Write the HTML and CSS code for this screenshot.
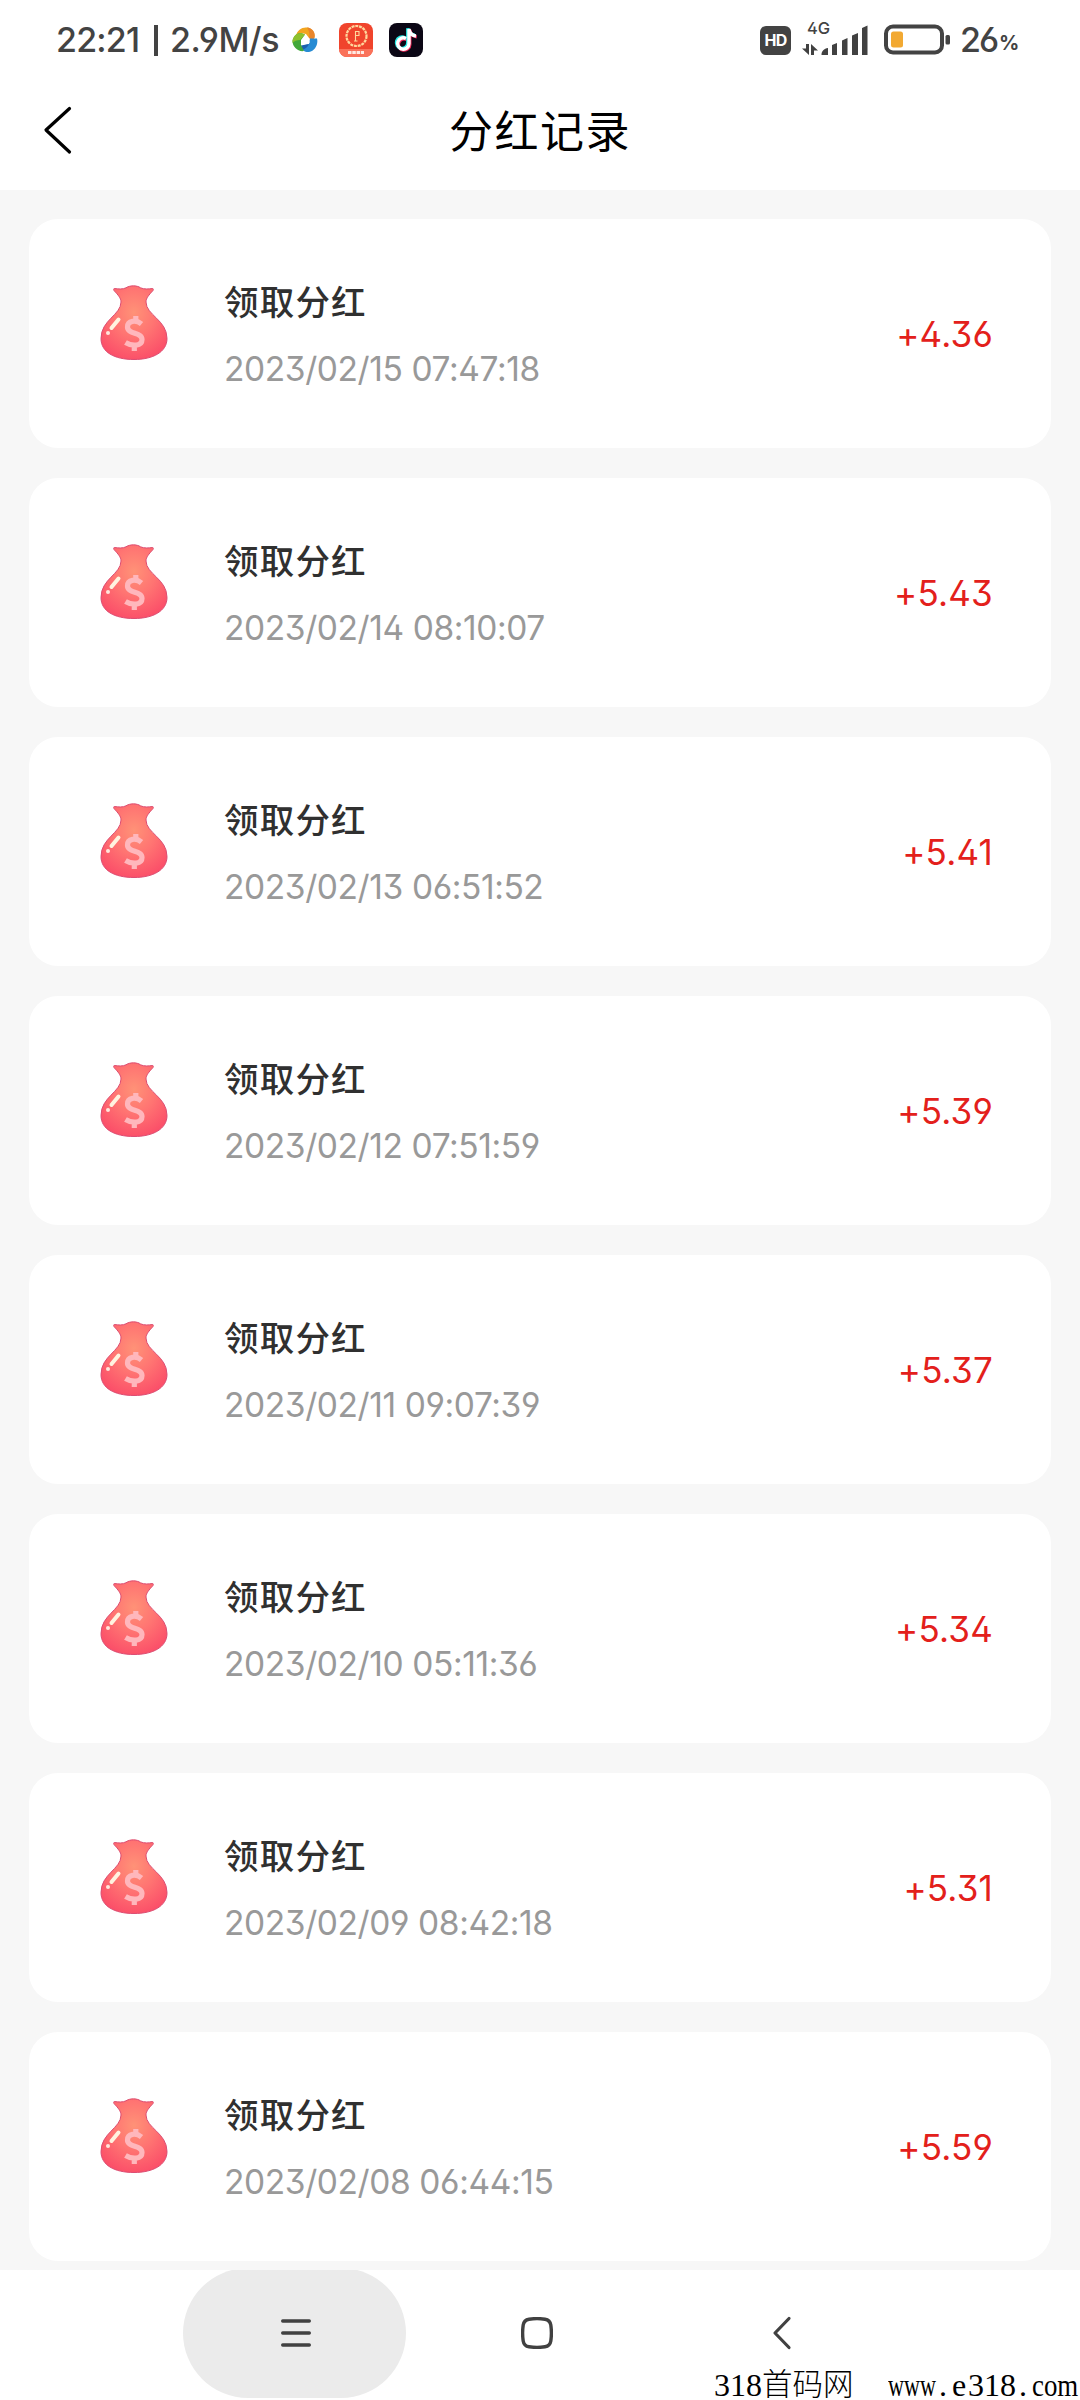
FILE: index.html
```
<!DOCTYPE html>
<html lang="zh-CN">
<head>
<meta charset="utf-8">
<title>分红记录</title>
<link rel="stylesheet" href="styles.css">
</head>
<body>
<svg width="0" height="0" class="defs">
  <defs>
    <radialGradient id="bagFill" cx="0.5" cy="0.36" r="0.65">
      <stop offset="0" stop-color="#ff9277"/><stop offset="0.5" stop-color="#ff7472"/><stop offset="1" stop-color="#fb5069"/>
    </radialGradient>
    <symbol id="bag" viewBox="0 0 68 76">
      <path d="M14.500 3.500C18 4 23 4.500 26 2.800C30 .2 37 .2 40.500 2.800C44 4.500 49 4 52.500 3.500C53.500 3.500 53.500 4.500 53 5.500C49 10 46 13 46 17C46 30 67 35 67 53.500C67 67 53 74.500 34 74.500C14 74.500 1 67 1 53.500C1 35 21 30 21 17C21 13 18 10 14 5.500C13.500 4.500 13.500 3.500 14.500 3.500Z" fill="url(#bagFill)" stroke="#dc4d72" stroke-width="1"/>
      <path d="M18.500 34.500L11.500 43" stroke="#fff3df" stroke-width="4" stroke-linecap="round"/>
      <circle cx="8" cy="48" r="2" fill="#ffe6dc"/>
      <path d="M41.500 39C36 34.500 27.500 35.500 27.500 42C27.500 50 42 46.500 42 54.500C42 61.500 32 61.500 25.500 57.500M35.800 31V37M34.300 59V66" fill="none" stroke="#ffb7bc" stroke-width="5.200"/>
    </symbol>
  </defs>
</svg>
<div class="screen">
  <div class="status">
    <span class="clock">22:21</span><span class="bar"></span><span class="speed">2.9M/s</span>
    <svg class="swirl" width="26" height="26" viewBox="0 0 26 26">
      <path d="M4 9C5 3 10 0 15 .5C20 1 23 5 22.500 10L21 13L17 11L14 7L9 6Z" fill="#f2a51e"/>
      <path d="M15 .5C20 1 24 5 22.500 11L20.500 13L17 11C18 7 17 3 15 .5Z" fill="#e8852b"/>
      <path d="M18 11.500L25 11.500C26.500 17 23 24 17 25C13 25.500 10 23 9 20L13 18L17 17Z" fill="#278bd3"/>
      <path d="M9 18.500L17 17C16 20 13 22 10 23Z" fill="#1c5fae"/>
      <path d="M9 6L13 7.500L9 13L9 18L12 24C6 25 .5 20 .5 14C1.500 9 5 6 9 6Z" fill="#42a83a"/>
      <path d="M9 6L13 7.500L8 13C5 13 2 14 .5 16C0 10 4 6 9 6Z" fill="#8dc02d"/>
      <path d="M13.500 8.500L18 15.500L9 16.500Z" fill="#fff"/>
    </svg>
    <svg class="app" width="34" height="34" viewBox="0 0 34 34">
      <rect width="34" height="34" rx="8" fill="#f0442c"/>
      <path d="M0 26H34A8 8 0 0 1 26 34H8A8 8 0 0 1 0 26Z" fill="#fa725a"/>
      <circle cx="17.500" cy="13" r="10" fill="none" stroke="#ffd79d" stroke-width="2.200" stroke-dasharray="3 .8"/>
      <path d="M16.500 18V8.500H20V12.500H17M15 18H18.500" fill="none" stroke="#ffd79d" stroke-width="1.100"/>
      <path d="M9 29.500H25" stroke="#ffe9e2" stroke-width="3.200" stroke-dasharray="3.500 .8"/>
    </svg>
    <svg class="app" width="34" height="34" viewBox="0 0 34 34">
      <rect width="34" height="34" rx="8" fill="#0b0715"/>
      <g fill="none" stroke-width="3.400">
        <path d="M17 15.500A5.700 5.700 0 1 0 20 20.500V6C20.500 10 23 12.500 27 13" stroke="#f3295b" transform="translate(.8 .9)"/>
        <path d="M17 15.500A5.700 5.700 0 1 0 20 20.500V6C20.500 10 23 12.500 27 13" stroke="#28e9e5" transform="translate(-1.200 -.8)"/>
        <path d="M17 15.500A5.700 5.700 0 1 0 20 20.500V6C20.500 10 23 12.500 27 13" stroke="#fff"/>
      </g>
    </svg>
    <span class="grow"></span>
    <span class="hd">HD</span>
    <div class="signal">
      <span class="net">4G</span>
      <svg width="68" height="34" viewBox="0 0 68 34" fill="#414141">
        <path d="M5 21H8V32L1 25.500H5ZM10 32V21L17 27.500H13V32Z"/>
        <path d="M20.500 32C20.500 28 23 25.500 27 25V32ZM31 32V22L36 20V32ZM41 32V17.500L46.500 15V32ZM51 32V12.500L57 10V32ZM61 32V5L66.500 2.500V32Z"/>
      </svg>
    </div>
    <svg class="battery" width="68" height="32" viewBox="0 0 68 32">
      <rect x="2" y="2.500" width="56" height="26" rx="7" fill="none" stroke="#434343" stroke-width="4"/>
      <rect x="7" y="7.500" width="12" height="16" rx="2.500" fill="#f2a932"/>
      <rect x="61.500" y="11" width="4.500" height="9.500" rx="1.500" fill="#434343"/>
    </svg>
    <span class="level">26</span><span class="pct">%</span>
  </div>
  <header class="header">
    <svg class="back" width="34" height="50" viewBox="0 0 34 50"><path d="M29.500 2.500L6 24L29.500 46" fill="none" stroke="#000" stroke-width="3.200" stroke-linecap="round" stroke-linejoin="round"/></svg>
    <h1>分红记录</h1>
  </header>
  <main class="list">
    <article class="card"><svg class="bag"><use href="#bag"/></svg><div class="info"><h2>领取分红</h2><time>2023/02/15 07:47:18</time></div><b>+4.36</b></article>
    <article class="card"><svg class="bag"><use href="#bag"/></svg><div class="info"><h2>领取分红</h2><time>2023/02/14 08:10:07</time></div><b>+5.43</b></article>
    <article class="card"><svg class="bag"><use href="#bag"/></svg><div class="info"><h2>领取分红</h2><time>2023/02/13 06:51:52</time></div><b>+5.41</b></article>
    <article class="card"><svg class="bag"><use href="#bag"/></svg><div class="info"><h2>领取分红</h2><time>2023/02/12 07:51:59</time></div><b>+5.39</b></article>
    <article class="card"><svg class="bag"><use href="#bag"/></svg><div class="info"><h2>领取分红</h2><time>2023/02/11 09:07:39</time></div><b>+5.37</b></article>
    <article class="card"><svg class="bag"><use href="#bag"/></svg><div class="info"><h2>领取分红</h2><time>2023/02/10 05:11:36</time></div><b>+5.34</b></article>
    <article class="card"><svg class="bag"><use href="#bag"/></svg><div class="info"><h2>领取分红</h2><time>2023/02/09 08:42:18</time></div><b>+5.31</b></article>
    <article class="card"><svg class="bag"><use href="#bag"/></svg><div class="info"><h2>领取分红</h2><time>2023/02/08 06:44:15</time></div><b>+5.59</b></article>
  </main>
  <nav class="nav">
    <div class="pill"><svg width="30" height="30" viewBox="0 0 30 30"><path d="M1.700 3H28.300M1.700 15H28.300M1.700 27H28.300" stroke="#414141" stroke-width="3.400" stroke-linecap="round"/></svg></div>
    <svg class="home" width="32" height="32" viewBox="0 0 32 32"><path d="M8 2.200Q16 1 24 2.200Q29 3 29.800 8Q31 16 29.800 24Q29 29 24 29.800Q16 31 8 29.800Q3 29 2.200 24Q1 16 2.200 8Q3 3 8 2.200Z" fill="none" stroke="#414141" stroke-width="3.400"/></svg>
    <svg class="prev" width="20" height="34" viewBox="0 0 20 34"><path d="M17 2.500L3 17L17 31.500" fill="none" stroke="#414141" stroke-width="3.200" stroke-linecap="round" stroke-linejoin="round"/></svg>
  </nav>
  <div class="mark"><span>318</span><span class="cjk">首码网</span><span class="www">www</span><span class="dot">.</span><span class="mid">e</span><span>318</span><span class="dot">.</span><span class="com">com</span></div>
</div>
</body>
</html>
```
FILE: styles.css
```
* { box-sizing: border-box; }
body { margin: 0; font-family: Inter, "Noto Sans CJK SC", sans-serif; font-feature-settings: "ss01"; }
h1, h2 { margin: 0; }
.defs { position: absolute; }
.screen { position: relative; width: 1080px; height: 2400px; overflow: hidden; background: #f7f7f7; display: flex; flex-direction: column; }
.status { flex: none; height: 78px; padding: 2px 62px 0 56px; background: #fff; display: flex; align-items: center; color: #434343; font-size: 34px; font-weight: 500; line-height: 76px; white-space: nowrap; }
.clock { width: 98px; letter-spacing: -0.8px; }
.bar { width: 4px; height: 31px; background: #434343; margin-right: 12px; }
.speed { width: 122px; letter-spacing: -0.4px; }
.swirl { flex: none; margin-right: 21px; }
.app { flex: none; margin-right: 16px; }
.grow { flex: 1; }
.hd { width: 31px; height: 29px; border-radius: 6px; background: #434343; color: #fff; font-size: 16px; font-weight: 700; line-height: 29px; text-align: center; letter-spacing: -0.7px; margin-right: 10px; }
.signal { position: relative; width: 68px; height: 34px; margin-right: 15px; display: flex; }
.net { position: absolute; left: 6px; top: -3px; font-size: 16.500px; line-height: 16px; }
.battery { flex: none; margin-right: 8px; }
.level { width: 39px; letter-spacing: -2px; }
.pct { width: 19px; font-size: 20px; line-height: 20px; padding-top: 6px; font-weight: 700; }
.header { flex: none; height: 112px; background: #fff; display: flex; align-items: center; padding: 0 40px 7px; }
.header h1 { flex: 1; margin: 2px 34px 0 0; text-align: center; font-size: 44px; letter-spacing: 1.500px; line-height: 66px; font-weight: 400; color: #000; }
.list { padding: 29px 29px 0; display: flex; flex-direction: column; gap: 30px; }
.card { height: 229px; border-radius: 29px; background: #fff; display: flex; padding: 0 58px 0 71px; align-items: center; }
.bag { flex: none; width: 68px; height: 76px; margin-bottom: 22px; }
.info { flex: 1; padding: 4px 0 0 56px; }
.info h2 { color: #303030; font-size: 34.500px; letter-spacing: 1.200px; font-weight: 500; line-height: 54px; }
.info time { display: block; margin-top: 12px; color: #999; font-size: 33.500px; line-height: 54px; letter-spacing: -0.4px; white-space: nowrap; }
.card b { font-weight: 400; font-size: 35px; line-height: 50px; color: #e3201b; letter-spacing: 0.2px; }
.nav { position: absolute; left: 0; top: 2269.500px; width: 1080px; height: 131px; background: #fff; overflow: hidden; display: flex; align-items: center; padding-left: 183px; padding-bottom: 5px; }
.pill { width: 223px; height: 130px; border-radius: 65px; background: #ebebeb; display: flex; align-items: center; justify-content: center; flex: none; padding-left: 2px; }
.home { margin-left: 115px; }
.prev { margin-left: 219px; }
.mark { position: absolute; left: 714px; top: 2371px; display: flex; font: 32px/28px "Liberation Serif", "Noto Sans CJK SC", serif; color: #000; white-space: nowrap; }
.mark span { flex: none; width: 48px; transform-origin: left; }
.mark .cjk { width: 126px; font-size: 30.500px; font-weight: 300; }
.mark .www { transform: scaleX(.69); }
.mark .dot { width: 16px; padding-left: 3px; }
.mark .mid { width: 16px; }
.mark .com { transform: scaleX(.84); }
```
